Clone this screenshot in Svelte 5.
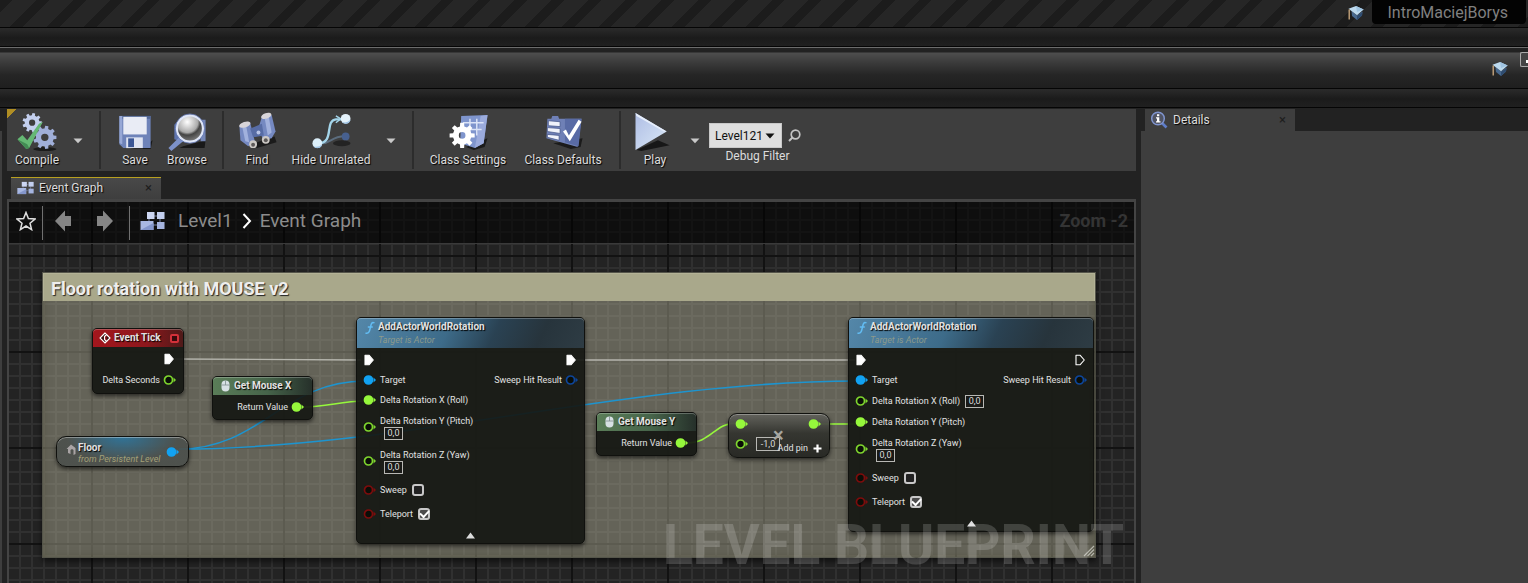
<script>
  function gear(cx, cy, outer, root, hole, teeth) {
    const step = (Math.PI * 2) / teeth;
    const at = (r, a) => `${(cx + r * Math.cos(a)).toFixed(2)} ${(cy + r * Math.sin(a)).toFixed(2)}`;
    let d = '';
    for (let i = 0; i < teeth; i++) {
      const a = i * step;
      d += `${i ? 'L' : 'M'}${at(root, a - step * 0.3)}L${at(outer, a - step * 0.2)}L${at(outer, a + step * 0.2)}L${at(root, a + step * 0.3)}`;
    }
    return `${d}ZM${cx - hole} ${cy}a${hole} ${hole} 0 1 0 ${hole * 2} 0a${hole} ${hole} 0 1 0 ${-hole * 2} 0Z`;
  }

  const green = '#96f83c';
  const blue = '#12a2f2';
  const navy = '#0d469c';
  const red = '#7d0c0c';

  let debugTarget = $state('Level121');

  let actorNodes = $state([
    {
      id: 'a', x: 347, y: 115, w: 229, wired: true,
      rows: [
        { label: 'Delta Rotation X (Roll)', filled: true },
        { label: 'Delta Rotation Y (Pitch)', value: '0,0', below: true },
        { label: 'Delta Rotation Z (Yaw)', value: '0,0', below: true }
      ],
      sweep: false, teleport: true
    },
    {
      id: 'b', x: 839, y: 115, w: 246, wired: false,
      rows: [
        { label: 'Delta Rotation X (Roll)', value: '0,0', below: false },
        { label: 'Delta Rotation Y (Pitch)', filled: true },
        { label: 'Delta Rotation Z (Yaw)', value: '0,0', below: true }
      ],
      sweep: false, teleport: true
    }
  ]);

  const mouseNodes = [
    { title: 'Get Mouse X', x: 203, y: 174 },
    { title: 'Get Mouse Y', x: 587, y: 210 }
  ];
  let factor = $state('-1,0');
</script>

{#snippet pin(color, filled)}
  <svg class="pin" width="14" height="12" viewBox="0 0 14 12" aria-hidden="true">
    <circle cx="5.5" cy="6" r="4" fill={filled ? color : '#0b0e08'} stroke={color} stroke-width="1.7" />
    <path d="M10.5 3.6L13 6L10.5 8.4Z" fill={color} />
  </svg>
{/snippet}

{#snippet exec(filled)}
  <svg class="pin" width="14" height="12" viewBox="0 0 14 12" aria-hidden="true">
    <path d="M2 1.2H6L10.3 6L6 10.8H2Z" fill={filled ? '#fff' : 'none'} stroke="#fff" stroke-width="1.1" stroke-linejoin="round" />
  </svg>
{/snippet}

{#snippet cap()}
  <svg width="16" height="16" viewBox="0 0 16 16" aria-hidden="true">
    <path d="M3.5 6L9 10.5L14.5 6.5L14 10.5L9 15L4 11Z" fill="#48698f" />
    <path d="M9 11L14.4 7L14 10.5L9 15Z" fill="#2f4c70" />
    <path d="M0.5 3.8L8 1L15.7 4.5L9 10.3Z" fill="#bcd9ee" />
    <path d="M8 1L15.7 4.5L9 7Z" fill="#9fc4e2" />
    <path d="M1.2 4.5V14.5" stroke="#d0ad82" stroke-width="1.3" />
  </svg>
{/snippet}

{#snippet graphIcon(w, h)}
  <svg width={w} height={h} viewBox="0 0 25 20" aria-hidden="true">
    <path d="M11 5H17M9 11V5M20 8V13M13 14H17" stroke="#7781a4" stroke-width="1" fill="none" />
    <rect x="7" y="1" width="7.5" height="7" fill="#ccd6f2" />
    <rect x="17" y="1" width="7.5" height="7" fill="#c3cfee" />
    <rect x="0.5" y="10" width="13" height="9" fill="#a9b8e2" />
    <path d="M0.5 19L13.5 12V19Z" fill="#8496cb" />
    <rect x="17" y="11" width="7.5" height="7" fill="#a5b4df" />
  </svg>
{/snippet}

{#snippet caret()}
  <svg width="10" height="6" viewBox="0 0 10 6" aria-hidden="true"><path d="M0.5 0.5H9.5L5 5.2Z" fill="#c9c9c9" /></svg>
{/snippet}

<div class="app">
  <header>
    <div class="stripes">
      {@render cap()}
      <span class="project">IntroMaciejBorys</span>
    </div>
    <div class="band"></div>
    <div class="titlebar">
      {@render cap()}
      <button class="winbtn" aria-label="Minimize"></button>
    </div>
    <div class="band"></div>
  </header>

  <main>
    <div class="gutter"></div>
    <section class="editor">
      <div class="toolbar">
        <button class="tool compile">
          <svg width="44" height="42" viewBox="0 0 44 42" aria-hidden="true">
            <ellipse cx="30" cy="39" rx="12" ry="2" fill="#1b1b1b" />
            <path d={gear(17, 12, 10, 7.6, 3.2, 9)} fill="#c3cfee" fill-rule="evenodd" />
            <path d={gear(30, 27, 12, 9.2, 3.8, 9)} fill="#a0afd9" fill-rule="evenodd" />
            <path d="M2 29L7 24.5L12 30L24 13L28 11L14 38L11 39Z" fill="#65b874" />
            <path d="M2 29L5 32L11 39L14 38L12 34Z" fill="#438c54" />
          </svg>
          <span>Compile</span>
        </button>
        <button class="drop" aria-label="Compile options">{@render caret()}</button>
        <i class="sep"></i>
        <button class="tool save">
          <svg width="40" height="42" viewBox="0 0 40 42" aria-hidden="true">
            <path d="M30 36L38 30L36 39H14Z" fill="#191919" />
            <path d="M4 5H36V38H8L4 34Z" fill="#6e83b9" />
            <path d="M4 5H36V8H4Z" fill="#526796" />
            <path d="M8 6H32V24H8Z" fill="#e9ecf5" />
            <path d="M11 27H28V38H11Z" fill="#dfe4f2" />
            <path d="M13 28H19V37H13Z" fill="#3c5796" />
            <path d="M4 5H7V34L4 33Z" fill="#97a8d6" />
          </svg>
          <span>Save</span>
        </button>
        <button class="tool browse">
          <svg width="44" height="42" viewBox="0 0 44 42" aria-hidden="true">
            <defs>
              <radialGradient id="lens" cx="0.4" cy="0.25" r="0.8">
                <stop offset="0" stop-color="#fff" />
                <stop offset="0.5" stop-color="#aaa" />
                <stop offset="0.62" stop-color="#444" />
                <stop offset="1" stop-color="#888" />
              </radialGradient>
            </defs>
            <path d="M18 36L41 30L40 38H14Z" fill="#191919" />
            <path d="M9 14L12 11L18 32L9 29Z" fill="#5e73ac" />
            <path d="M35 9H41V31H36Z" fill="#7486b6" />
            <path d="M14 27L18 31L6 41L3 38Z" fill="#7d92ca" />
            <circle cx="25" cy="18" r="13.5" fill="url(#lens)" stroke="#dfe6f7" stroke-width="2.5" />
            <circle cx="25" cy="18" r="15" fill="none" stroke="#6378b5" stroke-width="0.8" />
          </svg>
          <span>Browse</span>
        </button>
        <i class="sep"></i>
        <button class="tool find">
          <svg width="44" height="42" viewBox="0 0 44 42" aria-hidden="true">
            <path d="M16 34L40 26L42 32L22 38Z" fill="#1b1b1b" />
            <path d="M4 16L15 12L20 32L13 36L5 30Z" fill="#7589c1" />
            <path d="M27 6L37 4L41 21L37 28L28 30L24 16Z" fill="#7589c1" />
            <path d="M15 18L27 13L29 25L18 27Z" fill="#576ca5" />
            <path d="M7 17L11 15.5L14 32L10 31Z" fill="#a1b1dd" />
            <path d="M30 8L34 6L37 22L33 25Z" fill="#a1b1dd" />
            <ellipse cx="9.5" cy="14" rx="6" ry="2.8" transform="rotate(-18 9.5 14)" fill="#d8d5d9" />
            <ellipse cx="31.5" cy="5" rx="5.5" ry="2.8" transform="rotate(-18 31.5 5)" fill="#d8d5d9" />
            <circle cx="18" cy="34" r="4" fill="#cdc9c5" /><circle cx="18" cy="34.5" r="2" fill="#5d5a59" />
            <circle cx="31" cy="29.5" r="4" fill="#cdc9c5" /><circle cx="31" cy="30" r="2" fill="#5d5a59" />
            <circle cx="23.5" cy="22" r="2" fill="#b8c4e6" />
          </svg>
          <span>Find</span>
        </button>
        <button class="tool hide">
          <svg width="44" height="42" viewBox="0 0 44 42" aria-hidden="true">
            <ellipse cx="33" cy="33" rx="9" ry="3" fill="#232323" />
            <path d="M12 33C22 34 22 25 38 26" stroke="#5b6c7d" stroke-width="2" fill="none" />
            <circle cx="37" cy="26" r="4" fill="#47608f" />
            <path d="M9 33C26 33 15 10 27 8.5H35" stroke="#a4d5ea" stroke-width="2.4" fill="none" />
            <path d="M27 5L32 8L27 12" stroke="#a4d5ea" stroke-width="1.5" fill="none" />
            <circle cx="8" cy="33" r="5" fill="#dceffa" /><circle cx="37" cy="8" r="5" fill="#e4f2fb" />
            <path d="M4 36A5 5 0 0 0 13 34Q9 38 4 36ZM33 11A5 5 0 0 0 42 9Q38 13 33 11Z" fill="#9ec3e4" />
          </svg>
          <span>Hide Unrelated</span>
        </button>
        <button class="drop" aria-label="Hide options">{@render caret()}</button>
        <i class="sep"></i>
        <button class="tool settings">
          <svg width="44" height="42" viewBox="0 0 44 42" aria-hidden="true">
            <path d="M20 37L42 28L39 37L28 40Z" fill="#1b1b1b" />
            <path d="M15 5L42 4L38 33L29 38L14 33Z" fill="#7f95cd" />
            <path d="M35 5L42 4L38 33L29 38Z" fill="#9babdc" />
            <path d="M17 12H38M17 19H36M24 8V25M31 8V25" stroke="#dce4f7" stroke-width="1.5" />
            <path d={gear(16, 25, 13, 9.5, 3.4, 8)} fill="#fff" fill-rule="evenodd" />
          </svg>
          <span>Class Settings</span>
        </button>
        <button class="tool defaults">
          <svg width="44" height="42" viewBox="0 0 44 42" aria-hidden="true">
            <path d="M12 33L42 28L40 37L30 39Z" fill="#1b1b1b" />
            <path d="M10 8L11 5H17L18 8H41L37 37L5 28L6 8Z" fill="#6f80b6" />
            <path d="M24 8H41L38 36L24 32Z" fill="#596ba5" />
            <path d="M7 10L19 11V16L7 15ZM6 17L19 18V23L6 21ZM6 24L18 25V30L6 27Z" fill="#f0f2fa" stroke="#3e4e82" stroke-width="0.7" />
            <path d="M22 21L25 19L28 25L38 9L41 11L29 31Z" fill="#fff" />
          </svg>
          <span>Class Defaults</span>
        </button>
        <i class="sep"></i>
        <button class="tool play">
          <svg width="44" height="42" viewBox="0 0 44 42" aria-hidden="true">
            <defs><linearGradient id="tri" x1="0" y1="0" x2="1" y2="1"><stop offset="0" stop-color="#aebde4" /><stop offset="1" stop-color="#dbe9f7" /></linearGradient></defs>
            <path d="M3 40L25 30L37 35L8 41Z" fill="#171717" />
            <path d="M2 2L34 21L2 40Z" fill="url(#tri)" />
            <path d="M2 2L34 21L31 21L3 5Z" fill="#e6eefb" />
          </svg>
          <span>Play</span>
        </button>
        <button class="drop" aria-label="Play options">{@render caret()}</button>
        <div class="debug">
          <div class="debugrow">
            <div class="selectwrap">
              <select id="debug" bind:value={debugTarget}><option>Level121</option></select>
              <svg width="10" height="6" viewBox="0 0 10 6" aria-hidden="true"><path d="M0.5 0.5H9.5L5 5.5Z" fill="#111" /></svg>
            </div>
            <button class="search" aria-label="Search">
              <svg width="13" height="13" viewBox="0 0 13 13"><circle cx="7.5" cy="5.5" r="4.3" fill="none" stroke="#c4c4c4" stroke-width="1.7" /><path d="M4.5 8.5L1 12" stroke="#c4c4c4" stroke-width="2" /></svg>
            </button>
          </div>
          <label for="debug">Debug Filter</label>
        </div>
      </div>

      <div class="tabs">
        <div class="tab graphtab">
          {@render graphIcon(17, 14)}
          <span>Event Graph</span>
          <button aria-label="Close Event Graph">×</button>
        </div>
      </div>

      <div class="canvas">
        <div class="crumbs">
          <button class="star" aria-label="Favourite"><svg width="20" height="20" viewBox="0 0 20 20"><path d="M10 1.5L12.4 7.6L19 8L14 12.2L15.6 18.6L10 15L4.4 18.6L6 12.2L1 8L7.6 7.6Z" fill="none" stroke="#e0e0e0" stroke-width="1.5" /></svg></button>
          <i></i>
          <button class="nav" aria-label="Back"><svg width="18" height="22" viewBox="0 0 18 22"><path d="M1 11L11 0.5V6H17V16H11V21.5Z" fill="#858585" /></svg></button>
          <button class="nav" aria-label="Forward"><svg width="18" height="22" viewBox="0 0 18 22"><path d="M17 11L7 0.5V6H1V16H7V21.5Z" fill="#858585" /></svg></button>
          <i></i>
          <span class="gicon">{@render graphIcon(25, 20)}</span>
          <span class="crumb">Level1</span>
          <svg width="10" height="16" viewBox="0 0 10 16" aria-hidden="true"><path d="M1.5 1L8 8L1.5 15" fill="none" stroke="#fff" stroke-width="2" /></svg>
          <span class="crumb">Event Graph</span>
          <span class="zoom">Zoom -2</span>
        </div>

        <div class="comment">
          <h2>Floor rotation with MOUSE v2</h2>
          <svg class="grip" width="12" height="12" viewBox="0 0 12 12" aria-hidden="true"><path d="M1 11L11 1M4.5 11L11 4.5M8 11L11 8" stroke="#b4b4aa" stroke-width="1.2" /></svg>
        </div>

        <svg class="wires" aria-hidden="true">
          <g fill="none" stroke-width="1.6">
            <path d="M166 157L352 158M566 158H846" stroke="#b5b5ad" stroke-width="1.3" />
            <path d="M170 247C252 247 274 179 356 179" stroke="#1d94cf" />
            <path d="M170 247C390 247 620 179 848 179" stroke="#1d94cf" />
            <path d="M292 205C320 205 330 199 356 199" stroke={green} />
            <path d="M676 241C704 241 704 221 728 221M806 222H848" stroke={green} />
          </g>
        </svg>

        <article class="node tick">
          <h3><svg width="12" height="12" viewBox="0 0 12 12" aria-hidden="true"><path d="M6 1L1 6L6 11L7.5 9.5L5.5 7.500V4.500L7.500 2.500ZM7.500 2.500L11 6L7.500 9.500" fill="#3a0a0c" stroke="#fff" stroke-width="1.1" /></svg><span>Event Tick</span><b></b></h3>
          <div class="row out">{@render exec(true)}</div>
          <div class="row out"><span>Delta Seconds</span>{@render pin('#7fd62e', false)}</div>
        </article>

        {#each mouseNodes as n}
          <article class="node mouse" style="left:{n.x}px;top:{n.y}px">
            <h3><svg width="9" height="12" viewBox="0 0 9 12" aria-hidden="true"><rect x="0.5" y="0.5" width="8" height="11" rx="4" fill="#d7e0e4" /><path d="M4.5 0.5V5M0.5 5H8.5" stroke="#7e8d8d" stroke-width="0.8" /></svg><span>{n.title}</span></h3>
            <div class="row out"><span>Return Value</span>{@render pin(green, true)}</div>
          </article>
        {/each}

        <article class="node floor">
          <svg width="10" height="11" viewBox="0 0 10 11" aria-hidden="true"><path d="M0.5 5L5 0.5L9.5 4V10L7.5 11V6L6 5L4.5 6V10L2 9V5Z" fill="#a9a4a5" /></svg>
          <p><strong>Floor</strong><em>from Persistent Level</em></p>
          {@render pin(blue, true)}
        </article>

        <article class="node multiply">
          <div class="row">{@render pin(green, true)}<span class="push"></span>{@render pin(green, true)}</div>
          <div class="row">{@render pin('#7fd62e', false)}<input class="num" aria-label="Factor" bind:value={factor} /></div>
          <span class="times">×</span>
          <button class="addpin">Add pin <svg width="9" height="9" viewBox="0 0 9 9" aria-hidden="true"><path d="M4.5 0.5V8.5M0.5 4.5H8.5" stroke="#fff" stroke-width="2.2" /></svg></button>
        </article>

        {#each actorNodes as n}
          <article class="node actor" style="left:{n.x}px;top:{n.y}px;width:{n.w}px">
            <h3>
              <svg width="12" height="14" viewBox="0 0 12 14" aria-hidden="true"><path d="M10.5 2C7.5 0 7 4 6.5 6S5.5 13.5 1.5 12M3.8 6H8.8" fill="none" stroke="#62bcf2" stroke-width="1.5" /></svg>
              <p><strong>AddActorWorldRotation</strong><em>Target is Actor</em></p>
            </h3>
            <div class="row">{@render exec(true)}<span class="push"></span>{@render exec(n.wired)}</div>
            <div class="row">{@render pin(blue, true)}<span>Target</span><span class="push"></span><span>Sweep Hit Result</span>{@render pin(navy, false)}</div>
            {#each n.rows as r, i}
              <div class="row" class:tall={r.below} class:mid={r.value && !r.below}>
                {@render pin(r.filled ? green : '#7fd62e', r.filled)}
                <div class="field" class:stack={r.below}>
                  <label for="{n.id}{i}">{r.label}</label>
                  {#if r.value}<input id="{n.id}{i}" class="num" bind:value={r.value} />{/if}
                </div>
              </div>
            {/each}
            <div class="row check">{@render pin(red, false)}<label for="{n.id}s">Sweep</label><input id="{n.id}s" type="checkbox" bind:checked={n.sweep} /></div>
            <div class="row check">{@render pin(red, false)}<label for="{n.id}t">Teleport</label><input id="{n.id}t" type="checkbox" bind:checked={n.teleport} /></div>
            <button class="fold" aria-label="Collapse"><svg width="9" height="7" viewBox="0 0 9 7"><path d="M4.5 0.5L9 6.5H0Z" fill="#dcdcdc" /></svg></button>
          </article>
        {/each}

        <div class="watermark">LEVEL BLUEPRINT</div>
      </div>
    </section>

    <aside>
      <div class="tab details">
        <svg width="18" height="18" viewBox="0 0 18 18" aria-hidden="true"><path d="M12 12L16.5 16.5" stroke="#5e7cc8" stroke-width="2.6" /><circle cx="8" cy="7.5" r="6.3" fill="#505463" stroke="#7f94cf" stroke-width="1.5" /><path d="M7 3.3H9.3V5.2H7ZM6 6.3H9.3V10.2H10.5V11.5H6V10.2H7V7.6H6Z" fill="#fff" /></svg>
        <span>Details</span>
        <button aria-label="Close Details">×</button>
      </div>
      <div class="panel"></div>
    </aside>
  </main>
</div>

<style>
  :global(body) { margin: 0; background: #222; }
  * { box-sizing: border-box; }
  .app { font: 12px/16px Roboto, "Liberation Sans", sans-serif; color: #dcdcdc; min-height: 100vh; display: flex; flex-direction: column; background: #222; overflow: hidden; }
  button { font: inherit; color: inherit; background: none; border: 0; padding: 0; display: flex; align-items: center; justify-content: center; }
  svg { display: block; flex: none; }
  h2, h3, p { margin: 0; }

  .stripes { height: 28px; border-bottom: 1px solid #050505; display: flex; justify-content: flex-end; gap: 8px; padding: 0 2px 0 0; background: repeating-linear-gradient(135deg, #1c1c1c 0 9px, #262626 9px 26px); }
  .stripes > :global(svg) { margin-top: 5px; }
  .project { height: 24px; padding: 0 18px 0 15px; border-radius: 0 0 4px 4px; background: #030303; color: #808080; font-size: 16px; line-height: 25px; }
  .band { height: 19px; background: linear-gradient(#2b2b2b, #1b1b1b 55%, #202020); border-bottom: 1px solid #050505; }
  .titlebar { height: 42px; border-top: 1px solid #6c6c6c; border-bottom: 1px solid #050505; display: flex; justify-content: flex-end; gap: 12px; padding-top: 4px; background: linear-gradient(#222 0 4px, #4e4e4e 5px, #3c3c3c 14px, #252525 27px, #1f1f1f); }
  .titlebar > :global(svg) { margin-top: 9px; }
  .winbtn { width: 8px; height: 15px; border: 1px solid #aaa; border-right: 0; background: #444; border-radius: 2px 0 0 2px; position: relative; }
  .winbtn::after { content: ""; position: absolute; right: 0; bottom: 3px; width: 2px; height: 3px; background: #fff; }

  main { flex: 1; display: flex; padding-top: 1px; }
  .gutter { flex: 0 0 2px; margin: 22px 5px 0 0; background: #3e3e3e; }
  .editor { flex: 1; min-width: 0; display: flex; flex-direction: column; }
  aside { flex: 0 0 387px; margin-left: 5px; display: flex; flex-direction: column; }
  .panel { flex: 1; background: #3e3e3e; }

  .toolbar { height: 62px; display: flex; align-items: flex-start; background: linear-gradient(135deg, #b08e24 0 7px, transparent 7px), #3e3e3e; padding: 2px 0 0 4px; }
  .tool { flex-direction: column; text-shadow: 1px 1px 1px #000; white-space: nowrap; }
  .tool svg { height: 41px; }
  .tool span { line-height: 16px; }
  .tool.compile { width: 52px; }
  .tool.save { width: 52px; margin-left: 8px; }
  .tool.browse { width: 52px; margin-right: 9px; }
  .tool.find { width: 52px; margin-left: 7px; }
  .tool.hide { width: 96px; margin-right: -3px; }
  .tool.settings { width: 96px; margin-left: 6px; }
  .tool.defaults { width: 94px; margin-right: 9px; }
  .tool.play { width: 52px; margin-left: 8px; }
  .drop { width: 18px; height: 54px; padding-top: 5px; margin: 0 12px 0 6px; }
  .sep { width: 2px; height: 58px; background: #2c2c2c; }
  .play + .drop { margin: 0 5px 0 5px; }
  .debug { padding-top: 12px; }
  .debugrow { display: flex; align-items: center; gap: 6px; }
  .selectwrap { display: grid; align-items: center; width: 73px; }
  .selectwrap > * { grid-area: 1 / 1; }
  .selectwrap svg { justify-self: end; margin-right: 7px; pointer-events: none; }
  select { appearance: none; width: 100%; height: 25px; border: 1px solid #c8c8c8; border-radius: 0; background: #dedede; color: #111; font: inherit; padding: 0 5px; }
  .debug label { display: block; width: 97px; text-align: center; }

  .tabs { height: 28px; padding: 6px 0 0 4px; }
  .tab { width: 150px; height: 22px; display: flex; align-items: center; padding: 0 9px 0 5px; gap: 5px; background: #3e3e3e; text-shadow: 1px 1px 1px #000; }
  .tab button { margin-left: auto; color: #1d1d1d; font-size: 13px; text-shadow: none; }
  .graphtab { padding: 0 9px 2px 6px; border-top: 1px solid #b8a020; background: linear-gradient(#494949, #3e3e3e) padding-box; }
  .details { margin-left: 4px; }

  .canvas {
    flex: 1; min-height: 384px; position: relative; overflow: hidden; border: 2px solid #444; border-top-width: 3px; border-bottom: 0;
    background-color: #232323;
    background-image: linear-gradient(90deg, #121212 2px, transparent 2px), linear-gradient(#121212 2px, transparent 2px), linear-gradient(90deg, #303030 2px, transparent 2px), linear-gradient(#303030 2px, transparent 2px);
    background-size: 96px 96px, 96px 96px, 12px 12px, 12px 12px;
    background-position: 82px 53px, 82px 53px, 10px 5px, 10px 5px;
    background-origin: padding-box;
  }
  .crumbs { height: 42px; display: flex; align-items: center; padding: 0 6px 4px 7px; background: rgba(0, 0, 0, .6); border-bottom: 1px solid #3a3a3a; font-size: 19px; line-height: 24px; color: #8c8c8c; white-space: nowrap; }
  .crumbs > i { width: 1px; height: 34px; background: #707070; margin: 4px 10px 0 6px; align-self: flex-start; }
  .nav { width: 22px; margin-right: 20px; }
  .crumbs > i + .nav { margin-left: -1px; }
  .nav + .nav { margin-right: 7px; }
  .gicon { margin: 0 13px 0 0; }
  .crumb { margin-right: 9px; }
  .crumb + svg { margin-right: 8px; }
  .zoom { margin-left: auto; font-size: 18px; font-weight: 700; color: #343434; }

  .comment { position: absolute; left: 33px; top: 70px; width: 1054px; height: 286px; background: rgba(166, 164, 142, .5); border: 1px solid #55554a; box-shadow: 0 3px 6px rgba(0, 0, 0, .6), inset 0 0 8px rgba(75, 73, 52, .6); }
  .comment h2 { height: 28px; padding-left: 7px; background: #a9a88b; border: 1px solid #b3b296; border-width: 1px 1px 0; color: #eee; font-size: 18px; line-height: 30px; font-weight: 700; text-shadow: 1px 1px 1px #222; }
  .grip { position: absolute; right: 0; bottom: 0; }
  .wires { position: absolute; inset: 0; width: 100%; height: 100%; }

  .node { position: absolute; background: rgba(21, 23, 18, .92); border: 1px solid #10110e; border-radius: 5px; box-shadow: 0 2px 4px rgba(0, 0, 0, .6); color: #e2e2e2; font-size: 9px; line-height: 12px; white-space: nowrap; }
  .node h3 { display: flex; align-items: center; gap: 4px; font-size: 10px; line-height: 12px; font-weight: 700; border-radius: 4px 4px 0 0; box-shadow: inset 0 1px rgba(255, 255, 255, .25); text-shadow: 1px 1px 1px #000; }
  .node strong { display: block; font-size: 10px; font-weight: 700; text-shadow: 1px 1px 1px #000; }
  .node em { display: block; font-size: 9px; font-weight: 400; color: #8c9a8c; text-shadow: none; }
  .row { display: flex; align-items: center; gap: 3px; height: 20px; padding: 0 5px 0 6px; }
  .out { justify-content: flex-end; }
  .push { flex: 1; }

  .tick { left: 83px; top: 126px; width: 92px; padding-bottom: 3px; }
  .tick h3 { height: 18px; gap: 3px; padding: 0 4px 0 6px; background: linear-gradient(90deg, #a3161d, #8d171c 60%, #4f1a19); margin-bottom: 1px; }
  .tick h3 b { width: 9px; height: 9px; margin-left: auto; border: 2px solid #d3313a; background: #3a0a0c; border-radius: 2px; }
  .tick .row { height: 21px; padding-right: 6px; }
  .mouse { width: 101px; padding: 0 0 2px; }
  .mouse h3 { height: 18px; padding: 0 8px; background: linear-gradient(90deg, #5a7d58, #46644a 55%, #26302a); margin-bottom: 2px; }
  .mouse .row { padding-right: 7px; }
  .floor { left: 47px; top: 234px; width: 133px; height: 31px; display: flex; align-items: center; gap: 2px; padding: 0 8px 0 9px; border-radius: 10px; background: radial-gradient(ellipse at 50% 0, rgba(45, 116, 155, .95), rgba(76, 80, 76, .92) 60%); box-shadow: 0 2px 4px rgba(0, 0, 0, .6), inset 0 1px rgba(255, 255, 255, .35); }
  .floor p { flex: 1; padding-top: 4px; }
  .floor em { color: #a3a078; line-height: 11px; }
  .floor svg { margin-bottom: 4px; }
  .floor .pin { margin-bottom: 0; }
  .multiply { left: 719px; top: 211px; width: 102px; height: 45px; border-radius: 9px; background: linear-gradient(rgba(98, 98, 92, .94), rgba(50, 51, 46, .94) 45%, rgba(37, 38, 34, .94)); box-shadow: 0 2px 4px rgba(0, 0, 0, .6), inset 0 1px rgba(255, 255, 255, .3); }
  .multiply .row { gap: 7px; padding-right: 7px; }
  .multiply .num { width: 24px; height: 14px; background: none; }
  .times { position: absolute; left: 44px; top: 11px; font-size: 20px; line-height: 20px; font-weight: 700; color: #a6a6a0; }
  .addpin { position: absolute; right: 7px; bottom: 3px; gap: 5px; font-size: 9px; line-height: 12px; }

  .actor h3 { height: 30px; align-items: flex-start; padding: 3px 8px 0 7px; gap: 2px; margin-bottom: 2px; background: linear-gradient(115deg, #5487a9, #3d6b89 40%, #2a4253 60%, #27343c 80%, #2e3c44); }
  .actor h3 em { line-height: 15px; }
  .actor .mid { height: 22px; }
  .actor .tall { height: 34px; }
  .field { display: flex; align-items: center; gap: 5px; }
  .stack { flex-direction: column; align-items: flex-start; gap: 0; }
  .stack .num { margin-left: 4px; }
  .num { width: 19px; height: 13px; padding: 0; border: 1px solid #b8b8b4; background: #191a17; color: #dcdcdc; font: 9px/11px Roboto, "Liberation Sans", sans-serif; text-align: center; border-radius: 0; }
  .actor .check { height: 24px; }
  .check input { appearance: none; width: 12px; height: 12px; margin: 0 0 0 2px; border: 2px solid #c8c8c8; border-radius: 3px; background: #222; }
  .check input:checked { display: grid; place-items: center; background: #4c4c4c; }
  .check input:checked::after { content: ""; width: 7px; height: 4px; border: solid #fff; border-width: 0 0 2px 2px; rotate: -47deg; translate: 0 -1px; }
  .fold { width: 100%; height: 17px; padding-top: 1px; }

  .watermark { position: absolute; right: 10px; bottom: 2px; font-size: 55px; line-height: 72px; font-weight: 700; color: rgba(255, 255, 255, .17); white-space: nowrap; pointer-events: none; }
</style>
